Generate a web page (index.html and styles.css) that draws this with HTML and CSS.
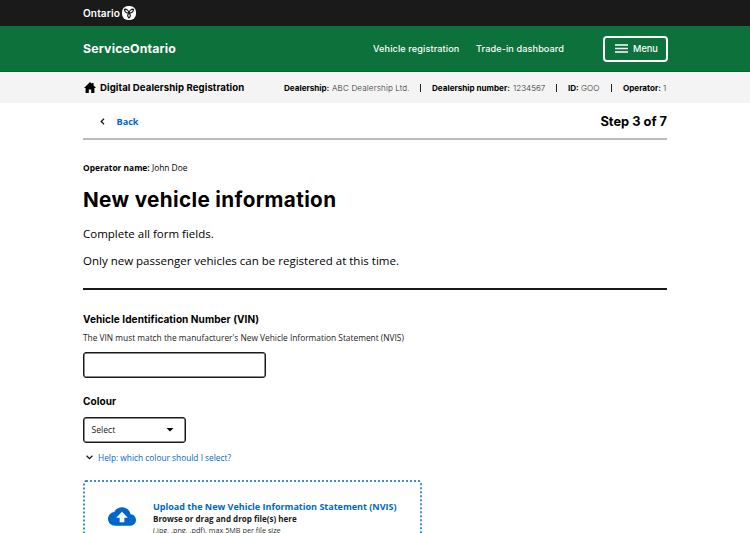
FILE: index.html
```
<!DOCTYPE html>
<html lang="en">
<head>
<meta charset="utf-8">
<title>New vehicle information - ServiceOntario</title>
<link rel="stylesheet" href="styles.css">
</head>
<body>
<div class="topbar"><div class="wrap">
  <span class="brand">Ontario</span>
  <svg class="trillium" viewBox="0 0 28 28" aria-hidden="true">
    <rect width="28" height="28" rx="12" fill="#fff"/>
    <g fill="none" stroke="#1a1a1a" stroke-width="2.4" stroke-linejoin="round">
      <path d="M14 14C9 14.500 5.500 11 5 6.500C9.500 6 13.500 9 14 14Z"/>
      <path d="M14 14C19 14.500 22.500 11 23 6.500C18.500 6 14.500 9 14 14Z"/>
      <path d="M14 14C10.500 17.500 10.500 21 14 24C17.500 21 17.500 17.500 14 14Z"/>
    </g>
  </svg>
</div></div>
<header class="header"><div class="wrap">
  <a class="service">ServiceOntario</a>
  <nav class="nav"><a class="nav-reg">Vehicle registration</a><a class="nav-trade">Trade-in dashboard</a></nav>
  <button class="menu"><svg viewBox="0 0 13 9" aria-hidden="true"><path d="M0 1h13M0 4.500h13M0 8h13" stroke="#fff" stroke-width="1.400"/></svg><span>Menu</span></button>
</div></header>
<div class="subheader"><div class="wrap">
  <svg class="home" viewBox="0 0 12 11" aria-hidden="true"><path d="M6 0 7.800 1.700V1h1.700v2.300L12 5.900h-1.600V11H7.200V7.500H4.800V11H1.600V5.900H0z"/></svg>
  <span class="app">Digital Dealership Registration</span>
  <div class="facts">
    <b class="f1">Dealership:</b><span class="v1">ABC Dealership Ltd.</span><i></i>
    <b class="f2">Dealership number:</b><span class="v2">1234567</span><i></i>
    <b class="f3">ID:</b><span class="v3">GOO</span><i></i>
    <b class="f4">Operator:</b><span class="v4">1</span>
  </div>
</div></div>
<main class="main">
  <div class="steps">
    <a class="back"><svg viewBox="0 0 5 7" aria-hidden="true"><path d="M4 .7 1.200 3.500 4 6.300" fill="none" stroke="#1a1a1a" stroke-width="1.300"/></svg>Back</a>
    <span class="step">Step 3 of 7</span>
  </div>
  <p class="operator"><b>Operator name:</b> John Doe</p>
  <h1>New vehicle information</h1>
  <p class="lead">Complete all form fields.</p>
  <p class="lead last">Only new passenger vehicles can be registered at this time.</p>
  <section class="form">
    <label class="vin-label" for="vin">Vehicle Identification Number (VIN)</label>
    <p class="hint">The VIN must match the manufacturer's New Vehicle Information Statement (NVIS)</p>
    <input id="vin" class="vin">
    <div class="colour-label">Colour</div>
    <div class="select"><span>Select</span><svg viewBox="0 0 8 4" aria-hidden="true"><path d="M.5 0h7L4 3.500z"/></svg></div>
    <a class="help"><svg viewBox="0 0 7 5" aria-hidden="true"><path d="M.6.8 3.500 3.700 6.400.8" fill="none" stroke="#1a1a1a" stroke-width="1.300"/></svg>Help: which colour should I select?</a>
    <div class="upload">
      <svg class="outline" aria-hidden="true"><rect x="1" y="1" width="337" height="100" rx="2"/></svg>
      <svg class="cloud" viewBox="0 4 24 16" aria-hidden="true"><path d="M19.350 10.040C18.670 6.590 15.640 4 12 4 9.110 4 6.600 5.640 5.350 8.040 2.340 8.360 0 10.910 0 14c0 3.310 2.690 6 6 6h13c2.760 0 5-2.240 5-5 0-2.640-2.050-4.780-4.650-4.960zM14 13v4h-4v-4H7l5-5 5 5h-3z"/></svg>
      <div class="upload-text">
        <div class="upload-title">Upload the New Vehicle Information Statement (NVIS)</div>
        <div class="browse">Browse or drag and drop file(s) here</div>
        <div class="types">(.jpg, .png, .pdf), max 5MB per file size</div>
      </div>
    </div>
  </section>
</main>
</body>
</html>
```
FILE: styles.css
```
* { box-sizing: border-box; }
body { margin: 0; height: 533px; overflow: hidden; background: #fff; color: #1a1a1a; font-family: "Open Sans", sans-serif; font-size: 8.35px; white-space: nowrap; }
p, h1 { margin: 0; }
svg { display: block; flex: none; }
.wrap { display: flex; align-items: center; height: 100%; margin: 0 82px 0 83px; }
.topbar { height: 26px; background: #1a1a1a; }
.brand { width: 37px; margin-right: 2px; color: #fff; font: 600 10.1px/14px Inter, sans-serif; letter-spacing: .1px; }
.trillium { width: 14px; height: 14px; }
.header { height: 46px; background: #0c713b; border-bottom: 1px solid #086331; color: #fff; font-family: Inter, sans-serif; }
.service { flex: none; width: 290px; font-size: 12.3px; font-weight: 700; letter-spacing: .17px; }
.nav { display: flex; flex: none; font-size: 9.1px; font-weight: 500; letter-spacing: .12px; }
.nav-reg { width: 103px; }
.nav-trade { width: 127px; }
.menu { display: flex; flex: none; align-items: center; gap: 5px; width: 65px; height: 26px; margin: 0; padding: 0 0 0 10px; border: 2px solid #fff; border-radius: 4px; background: none; color: #fff; font: 500 9.2px/12px Inter, sans-serif; }
.menu svg { width: 13px; height: 9px; }
.subheader { height: 31px; background: #f4f4f4; color: #000; font-family: Inter, sans-serif; }
.home { width: 12px; height: 11px; margin: 0 4px 0 1px; }
.app { flex: none; width: 184px; font-size: 9.6px; font-weight: 700; letter-spacing: .08px; }
.facts { display: flex; flex: none; align-items: center; font-size: 8.1px; }
.facts b, .facts span { flex: none; }
.facts b { font-weight: 700; }
.facts span { color: #333; font-weight: 300; }
.facts i { width: 1px; height: 8px; margin-right: 11px; background: #222; }
.f1 { width: 48px; }
.facts .v1 { width: 88px; letter-spacing: .13px; }
.f2 { width: 81px; }
.v2 { width: 43px; }
.f3 { width: 13px; }
.v3 { width: 30px; }
.f4 { width: 40px; }
.main { width: 584px; margin-left: 83px; color: #000; }
.steps { display: flex; align-items: center; justify-content: space-between; height: 37px; border-bottom: 2px solid #bbb; padding-top: 2px; }
.back { display: flex; align-items: center; gap: 12px; padding-left: 16.500px; color: #0066cc; font-size: 9.15px; font-weight: 700; }
.back svg { width: 5px; height: 7px; }
.step { font: 700 12.85px/18px Inter, sans-serif; }
.operator { margin-top: 22px; font-size: 8.4px; line-height: 12px; }
h1 { margin-top: 11px; font: 700 20.7px/30px Inter, sans-serif; letter-spacing: .35px; }
.lead { margin-top: 11px; font-size: 11.5px; line-height: 16px; color: #000; }
.lead + .last { margin-top: 10.500px; }
.form { margin-top: 19px; padding-top: 22px; border-top: 2px solid #1a1a1a; }
.vin-label, .colour-label { display: block; font: 700 10.05px/14px Inter, sans-serif; letter-spacing: .06px; }
.hint { margin-top: 6px; font-size: 8.36px; line-height: 12px; color: #222; }
.vin { display: block; width: 183px; height: 26px; margin-top: 8px; border: 1.500px solid #1a1a1a; border-radius: 3px; background: #fff; box-shadow: inset 0 0 0 .5px #1a1a1a; }
.colour-label { margin-top: 16px; }
.select { display: flex; align-items: center; justify-content: space-between; width: 103px; height: 26px; margin-top: 9px; padding: 1px 11px 0 7.500px; border: 1.500px solid #1a1a1a; border-radius: 3px; box-shadow: inset 0 0 0 .5px #1a1a1a; font-size: 8.6px; color: #222; }
.select svg { width: 8px; height: 4px; }
.help { display: flex; align-items: center; gap: 5px; height: 12px; margin: 9px 0 0 3px; color: #0066cc; font-size: 8.34px; }
.help svg { width: 7px; height: 5px; }
.upload { position: relative; display: flex; width: 339px; height: 102px; margin-top: 16px; }
.outline { position: absolute; inset: 0; width: 339px; height: 102px; }
.outline rect { fill: none; stroke: #0066cc; stroke-width: 1.500; stroke-dasharray: 2 2; }
.cloud { width: 28px; height: 19px; margin: 27px 17px 0 25px; fill: #0066cc; }
.upload-text { padding-top: 20px; }
.upload-title { color: #0066cc; font-size: 9.03px; font-weight: 700; line-height: 13px; }
.browse { font-size: 8.06px; font-weight: 700; line-height: 12px; color: #1a1a1a; }
.types { font-size: 7.28px; line-height: 10px; color: #333; }
```
